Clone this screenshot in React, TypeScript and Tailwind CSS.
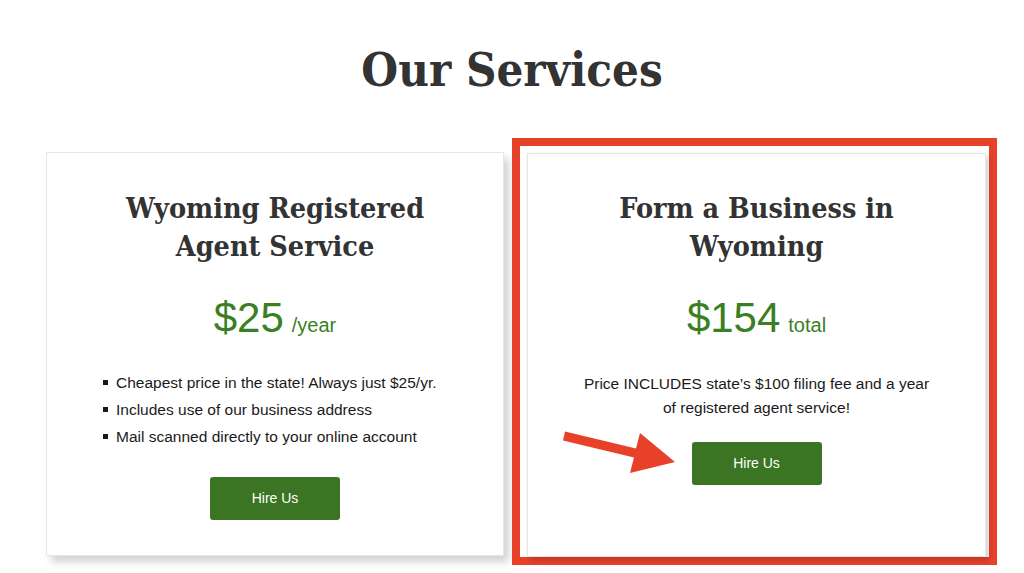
const slab = "font-['DejaVu_Serif_Condensed','DejaVu_Serif',serif]";
const sans = "font-['Liberation_Sans',Arial,sans-serif]";

function HireButton() {
  return (
    <button
      className={`${sans} w-[130px] h-[43px] rounded-[3px] bg-[#3b7422] text-white text-[14px]`}
    >
      Hire Us
    </button>
  );
}

function Price({ amount, unit }: { amount: string; unit: string }) {
  return (
    <div className={`${sans} text-[#3a7f24] flex items-baseline justify-center gap-[8px]`}>
      <span className="text-[42px] leading-none">{amount}</span>
      <span className="text-[20px] leading-none">{unit}</span>
    </div>
  );
}

export default function App() {
  const bullets = [
    "Cheapest price in the state! Always just $25/yr.",
    "Includes use of our business address",
    "Mail scanned directly to your online account",
  ];

  return (
    <div className="w-[1024px] h-[573px] bg-white overflow-hidden">
      <h1
        className={`${slab} text-center text-[#333333] font-bold text-[47px] leading-none pt-[46px]`}
      >
        Our Services
      </h1>

      <div className="flex items-start pl-[46px] gap-[8px] mt-[45px]">
        <div className="mt-[14px] w-[458px] h-[404px] bg-white border border-[#e6e6e6] shadow-[5px_6px_8px_rgba(0,0,0,0.18)] flex flex-col items-center">
          <h2
            className={`${slab} text-center text-[#333333] font-bold text-[28.5px] leading-[38px] mt-[36px]`}
          >
            Wyoming Registered
            <br />
            Agent Service
          </h2>
          <div className="mt-[32px]">
            <Price amount="$25" unit="/year" />
          </div>
          <ul className={`${sans} text-[15.5px] text-[#1a1a1a] mt-[30px] self-start ml-[56px]`}>
            {bullets.map((b) => (
              <li key={b} className="flex items-center h-[27px]">
                <span className="w-[5px] h-[5px] bg-[#1a1a1a] mr-[8px]" />
                {b}
              </li>
            ))}
          </ul>
          <div className="mt-[27px]">
            <HireButton />
          </div>
        </div>

        <div className="relative border-[8px] border-[#e8412a] pt-[7px] pl-[7px] pr-[3px]">
          <div className="w-[459px] h-[404px] bg-white border border-[#e6e6e6] shadow-[3px_3px_6px_rgba(0,0,0,0.18)] flex flex-col items-center">
            <h2
              className={`${slab} text-center text-[#333333] font-bold text-[28.5px] leading-[38px] mt-[35px]`}
            >
              Form a Business in
              <br />
              Wyoming
            </h2>
            <div className="mt-[32px]">
              <Price amount="$154" unit="total" />
            </div>
            <p
              className={`${sans} text-center text-[15.5px] leading-[24px] text-[#1a1a1a] mt-[33px]`}
            >
              Price INCLUDES state’s $100 filing fee and a year
              <br />
              of registered agent service!
            </p>
            <div className="mt-[22px]">
              <HireButton />
            </div>
          </div>
          <svg
            className="absolute left-[32px] top-[277px]"
            width="150"
            height="100"
            viewBox="0 0 150 100"
          >
            <polygon
              points="13,8.6 84,25.6 88,10 123,39 78,50 82,34.4 11,17.4"
              fill="#e8412a"
            />
          </svg>
        </div>
      </div>
    </div>
  );
}
